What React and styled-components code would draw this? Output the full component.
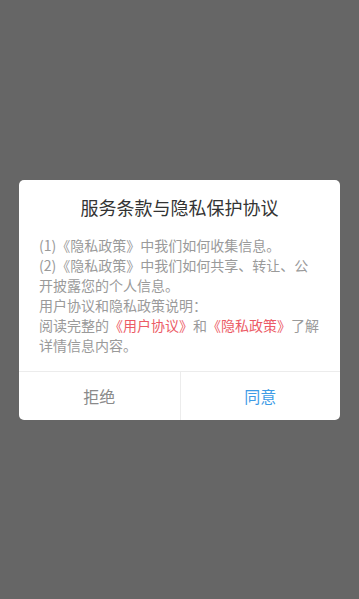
import styled, { createGlobalStyle } from "styled-components"

const GlobalStyle = createGlobalStyle`
html, body {
  margin: 0;
  padding: 0;
  background: #666666;
  font-family: "Noto Sans CJK SC", "Noto Sans", sans-serif;
}
`

const lines = [
    ['(1)《隐私政策》中我们如何收集信息。'],
    ['(2)《隐私政策》中我们如何共享、转让、公开披露您的个人信息。'],
    ['用户协议和隐私政策说明：'],
]

export default function App() {
    return (
        <>
            <GlobalStyle />
            <Overlay>
                <Dialog>
                    <Title>服务条款与隐私保护协议</Title>
                    <Body>
                        {lines.map((text, i) => <Line key={i}>{text}</Line>)}
                        <Line>
                            阅读完整的<Link>《用户协议》</Link>和<Link>《隐私政策》</Link>了解详情信息内容。
                        </Line>
                    </Body>
                    <Actions>
                        <ActionButton>拒绝</ActionButton>
                        <ActionButton primary>同意</ActionButton>
                    </Actions>
                </Dialog>
            </Overlay>
        </>
    )
}

const Overlay = styled.div`
display: flex;
align-items: center;
justify-content: center;
min-height: 100vh;
background: #666666;
`

const Dialog = styled.div`
width: 321px;
background: #ffffff;
border-radius: 5px;
overflow: hidden;
display: flex;
flex-direction: column;
`

const Title = styled.h1`
margin: 0;
padding-top: 14px;
font-size: 18px;
line-height: 26px;
font-weight: 400;
color: #333333;
text-align: center;
`

const Body = styled.div`
padding: 15px 20px 16px;
`

const Line = styled.p`
margin: 0;
font-size: 14px;
line-height: 20px;
color: #9a9a9a;
`

const Link = styled.span`
color: #ec5b66;
`

const Actions = styled.div`
display: grid;
grid-template-columns: 1fr 1fr;
border-top: 1px solid #ececec;
`

const ActionButton = styled.button`
height: 48px;
border: none;
background: transparent;
font-family: inherit;
font-size: 16px;
color: ${p => p.primary ? '#3d9be6' : '#8a8a8a'};
border-left: ${p => p.primary ? '1px solid #ececec' : 'none'};
padding: 0;
`
